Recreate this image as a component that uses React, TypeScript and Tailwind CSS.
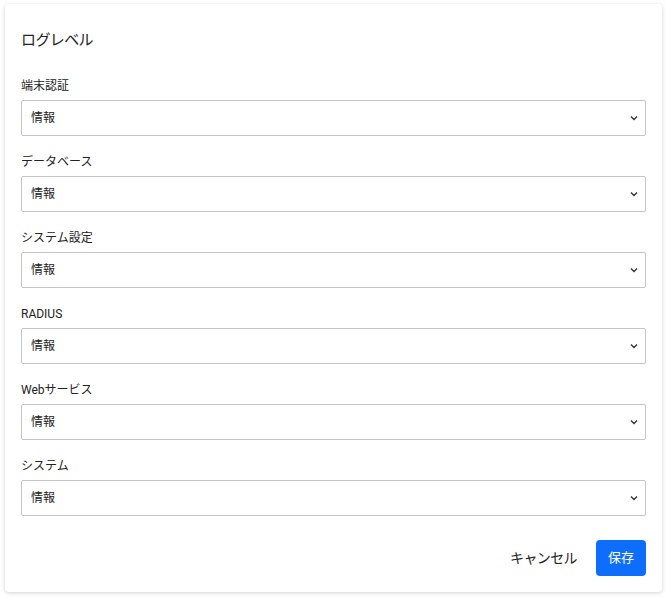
import React from "react";

const fields = ["端末認証", "データベース", "システム設定", "RADIUS", "Webサービス", "システム"];

function Chevron() {
  return (
    <svg width="8" height="6" viewBox="0 0 8 6" className="absolute right-[7px] top-1/2 -translate-y-1/2 pointer-events-none">
      <path d="M1 1.5 L4 4.5 L7 1.5" fill="none" stroke="#333" strokeWidth="1.4" />
    </svg>
  );
}

export default function App() {
  return (
    <div
      className="min-h-[598px] w-[667px] bg-white pt-[4px] pl-[5px]"
      style={{ fontFamily: 'Roboto, "Noto Sans CJK JP", sans-serif' }}
    >
      <div className="w-[657px] rounded-[4px] bg-white px-[16px] pt-[24px] pb-[16px] shadow-[0_1px_4px_rgba(0,0,0,0.18)]">
        <div className="text-[15px] leading-[24px] tracking-[-0.6px] text-[#222]">ログレベル</div>
        <div className="mt-[24px] flex flex-col gap-[16px]">
          {fields.map((f) => (
            <div key={f} className="flex flex-col gap-[4px]">
              <div className="text-[12px] leading-[20px] text-[#222]">{f}</div>
              <div className="relative h-[36px] w-full rounded-[2px] border border-[#c4c4c4] bg-white">
                <div className="pl-[9px] text-[12px] leading-[34px] text-[#222]">情報</div>
                <Chevron />
              </div>
            </div>
          ))}
        </div>
        <div className="mt-[24px] flex items-center justify-end gap-[11px]">
          <button className="h-[36px] px-[8px] text-[14px] tracking-[-0.6px] text-[#222]">キャンセル</button>
          <button className="h-[36px] w-[50px] rounded-[4px] bg-[#0d6efd] text-[13px] text-white">保存</button>
        </div>
      </div>
    </div>
  );
}
